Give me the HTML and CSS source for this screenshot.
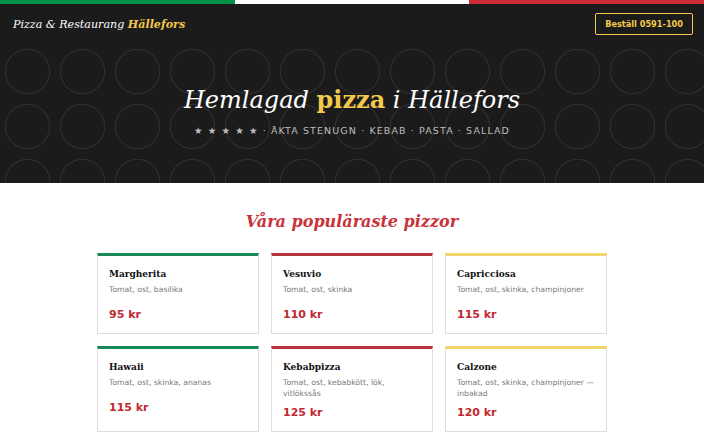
FILE: index.html
```html
<!DOCTYPE html>
<html lang="sv">
<head>
<meta charset="utf-8">
<title>Pizza &amp; Restaurang Hällefors</title>
<link rel="stylesheet" href="styles.css">
</head>
<body>
<div class="flag">
  <span class="flag-green"></span>
  <span class="flag-white"></span>
  <span class="flag-red"></span>
</div>
<header class="site-header">
  <nav class="topbar">
    <a class="brand" href="#">Pizza &amp; Restaurang <b>Hällefors</b></a>
    <a class="order" href="#">Beställ 0591-100</a>
  </nav>
  <section class="hero">
    <h1 class="hero-title">Hemlagad <b>pizza</b> i Hällefors</h1>
    <p class="hero-tagline">★ ★ ★ ★ ★ · ÄKTA STENUGN · KEBAB · PASTA · SALLAD</p>
  </section>
</header>
<main class="menu">
  <h2 class="menu-title">Våra populäraste pizzor</h2>
  <div class="cards">
    <article class="card card-green">
      <h3 class="card-name">Margherita</h3>
      <p class="card-desc">Tomat, ost, basilika</p>
      <p class="card-price">95 kr</p>
    </article>
    <article class="card card-red">
      <h3 class="card-name">Vesuvio</h3>
      <p class="card-desc">Tomat, ost, skinka</p>
      <p class="card-price">110 kr</p>
    </article>
    <article class="card card-yellow">
      <h3 class="card-name">Capricciosa</h3>
      <p class="card-desc">Tomat, ost, skinka, champinjoner</p>
      <p class="card-price">115 kr</p>
    </article>
    <article class="card card-green">
      <h3 class="card-name">Hawaii</h3>
      <p class="card-desc">Tomat, ost, skinka, ananas</p>
      <p class="card-price">115 kr</p>
    </article>
    <article class="card card-red">
      <h3 class="card-name">Kebabpizza</h3>
      <p class="card-desc">Tomat, ost, kebabkött, lök, vitlökssås</p>
      <p class="card-price">125 kr</p>
    </article>
    <article class="card card-yellow">
      <h3 class="card-name">Calzone</h3>
      <p class="card-desc">Tomat, ost, skinka, champinjoner — inbakad</p>
      <p class="card-price">120 kr</p>
    </article>
  </div>
</main>
</body>
</html>
```
FILE: styles.css
```css
* { box-sizing: border-box; }

body {
  margin: 0;
  background: #fff;
  font-family: "DejaVu Sans", Verdana, sans-serif;
  color: #222;
}

/* tricolore strip along the very top */
.flag {
  display: flex;
  height: 4px;
}
.flag span { flex: 1; }
.flag-green { background: #009246; }
.flag-white { background: #fff; }
.flag-red { background: #ce2b37; }

.site-header {
  background-color: #1c1b1b;
}

.topbar {
  display: flex;
  align-items: center;
  justify-content: space-between;
  height: 40px;
  padding: 0 11px 0 13px;
}

.brand {
  margin-top: 1px;
  font-family: "DejaVu Serif", Georgia, serif;
  font-style: italic;
  font-size: 11.1px;
  color: #fff;
  text-decoration: none;
}
.brand b { color: #f2c94c; }

.order {
  display: inline-flex;
  align-items: center;
  height: 22px;
  padding: 0 9px;
  border: 1px solid #f2c94c;
  border-radius: 2px;
  color: #f2c94c;
  font-weight: bold;
  font-size: 8.2px;
  text-decoration: none;
}

/* ring pattern behind the hero */
.hero {
  height: 139px;
  padding-top: 39px;
  text-align: center;
  background-image: radial-gradient(circle at 27.5px 27.5px, transparent 21.3px, #2f2e2e 21.8px, #2f2e2e 22.4px, transparent 22.9px);
  background-size: 55px 55px;
}

.hero-title {
  margin: 0;
  font-family: "DejaVu Serif", Georgia, serif;
  font-style: italic;
  font-weight: normal;
  font-size: 24px;
  line-height: 34px;
  color: #fff;
}
.hero-title b {
  font-style: normal;
  color: #f2c94c;
}

.hero-tagline {
  margin: 7px 0 0;
  font-size: 9.5px;
  line-height: 14px;
  letter-spacing: 1.1px;
  color: #bdbdbd;
}

.menu {
  padding: 27px 0 40px;
}

.menu-title {
  margin: 0 0 19px;
  text-align: center;
  font-family: "DejaVu Serif", Georgia, serif;
  font-style: italic;
  font-size: 16px;
  line-height: 24px;
  color: #c8323b;
}

.cards {
  display: grid;
  grid-template-columns: repeat(3, 1fr);
  gap: 12px;
  width: 510px;
  margin: 0 auto;
}

.card {
  border: 1px solid #ddd;
  border-top: 3px solid;
  padding: 11px 11px 10.7px;
  background: #fff;
}
.card-green { border-top-color: #17895a; }
.card-red { border-top-color: #b3343f; }
.card-yellow { border-top-color: #f0d568; }

.card-name {
  margin: 0;
  font-family: "DejaVu Serif", Georgia, serif;
  font-size: 9px;
  line-height: 14px;
  color: #111;
}

.card-desc {
  margin: 3.3px 0 0;
  min-height: 17.2px;
  font-size: 7.7px;
  line-height: 11.3px;
  color: #7a7a7a;
}

.card-price {
  margin: 6.5px 0 0;
  font-weight: bold;
  font-size: 11px;
  line-height: 14px;
  color: #c0282f;
}
```
